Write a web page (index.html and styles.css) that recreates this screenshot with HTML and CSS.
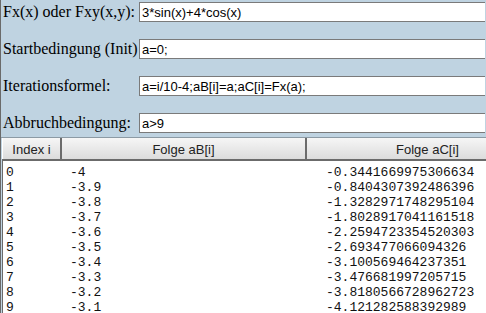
FILE: index.html
```html
<!DOCTYPE html>
<html lang="de">
<head>
    <meta charset="UTF-8">
    <title>Iteration</title>
    <link rel="stylesheet" href="styles.css">
</head>
<body>
    <div class="page">
        <div class="form">
            <div class="row">
                <label class="lbl">Fx(x) oder Fxy(x,y):</label>
                <input class="inp" type="text" value="3*sin(x)+4*cos(x)">
            </div>
            <div class="row">
                <label class="lbl">Startbedingung (Init)</label>
                <input class="inp" type="text" value="a=0;">
            </div>
            <div class="row">
                <label class="lbl">Iterationsformel:</label>
                <input class="inp" type="text" value="a=i/10-4;aB[i]=a;aC[i]=Fx(a);">
            </div>
            <div class="row last">
                <label class="lbl">Abbruchbedingung:</label>
                <input class="inp" type="text" value="a>9">
            </div>
        </div>
        <div class="grid">
            <div class="head">
                <div class="hcell c1">Index i</div>
                <div class="hcell c2">Folge aB[i]</div>
                <div class="hcell c3">Folge aC[i]</div>
            </div>
            <div class="body">
                <div class="line"><span>0</span><span>-4</span><span>-0.3441669975306634</span></div>
                <div class="line"><span>1</span><span>-3.9</span><span>-0.8404307392486396</span></div>
                <div class="line"><span>2</span><span>-3.8</span><span>-1.3282971748295104</span></div>
                <div class="line"><span>3</span><span>-3.7</span><span>-1.8028917041161518</span></div>
                <div class="line"><span>4</span><span>-3.6</span><span>-2.2594723354520303</span></div>
                <div class="line"><span>5</span><span>-3.5</span><span>-2.693477066094326</span></div>
                <div class="line"><span>6</span><span>-3.4</span><span>-3.100569464237351</span></div>
                <div class="line"><span>7</span><span>-3.3</span><span>-3.476681997205715</span></div>
                <div class="line"><span>8</span><span>-3.2</span><span>-3.8180566728962723</span></div>
                <div class="line"><span>9</span><span>-3.1</span><span>-4.121282588392989</span></div>
            </div>
        </div>
    </div>
</body>
</html>
```

FILE: styles.css
```css
html, body {
    margin: 0;
    height: 100%;
    overflow: hidden;
}
body {
    background-color: rgb(191, 211, 225);
}
.page {
    border-left: 1px solid #6a6a6a;
    min-height: 100%;
    box-sizing: border-box;
}
.form {
    padding: 2px 0 0 2px;
}
.row {
    display: flex;
    align-items: baseline;
    height: 20px;
    margin-bottom: 17px;
}
.row.last {
    margin-bottom: 4px;
}
.lbl {
    flex: 0 0 136px;
    white-space: nowrap;
    font-family: "Liberation Serif", serif;
    font-size: 16px;
    color: #000;
}
.inp {
    flex: 0 0 346px;
    box-sizing: border-box;
    height: 20px;
    margin: 0;
    padding: 0 2px;
    border: 1px solid #7a7a7a;
    border-right: none;
    background: #fff;
    font-family: "Liberation Sans", Arial, sans-serif;
    font-size: 13px;
    color: #000;
    outline: none;
}
.grid {
    border-top: 1px solid #8c9aa4;
}
.head {
    display: flex;
    height: 21px;
    margin-left: 1px;
    border-bottom: 2px solid #6b6b6b;
    background: linear-gradient(#f6f6f6, #dcdcdc);
    overflow: hidden;
}
.hcell {
    flex: 0 0 auto;
    box-sizing: border-box;
    text-align: center;
    font-family: "Liberation Sans", Arial, sans-serif;
    font-size: 13px;
    line-height: 21px;
    padding-top: 1px;
    color: #222;
    white-space: nowrap;
}
.c1 {
    width: 60px;
    border-left: 1px solid #fff;
    border-right: 2px solid #6b6b6b;
}
.c2 {
    width: 245px;
    border-right: 2px solid #6b6b6b;
}
.c3 {
    width: 241px;
}
.body {
    margin-left: 1px;
    border-left: 1px solid #6b6b6b;
    background: #fff;
    padding: 4px 0 0 3px;
    min-height: 160px;
}
.line {
    display: grid;
    grid-template-columns: 64px 256px 1fr;
    font-family: "Liberation Mono", "Courier New", monospace;
    font-size: 13px;
    line-height: 15px;
    color: #111;
    white-space: nowrap;
}
```
